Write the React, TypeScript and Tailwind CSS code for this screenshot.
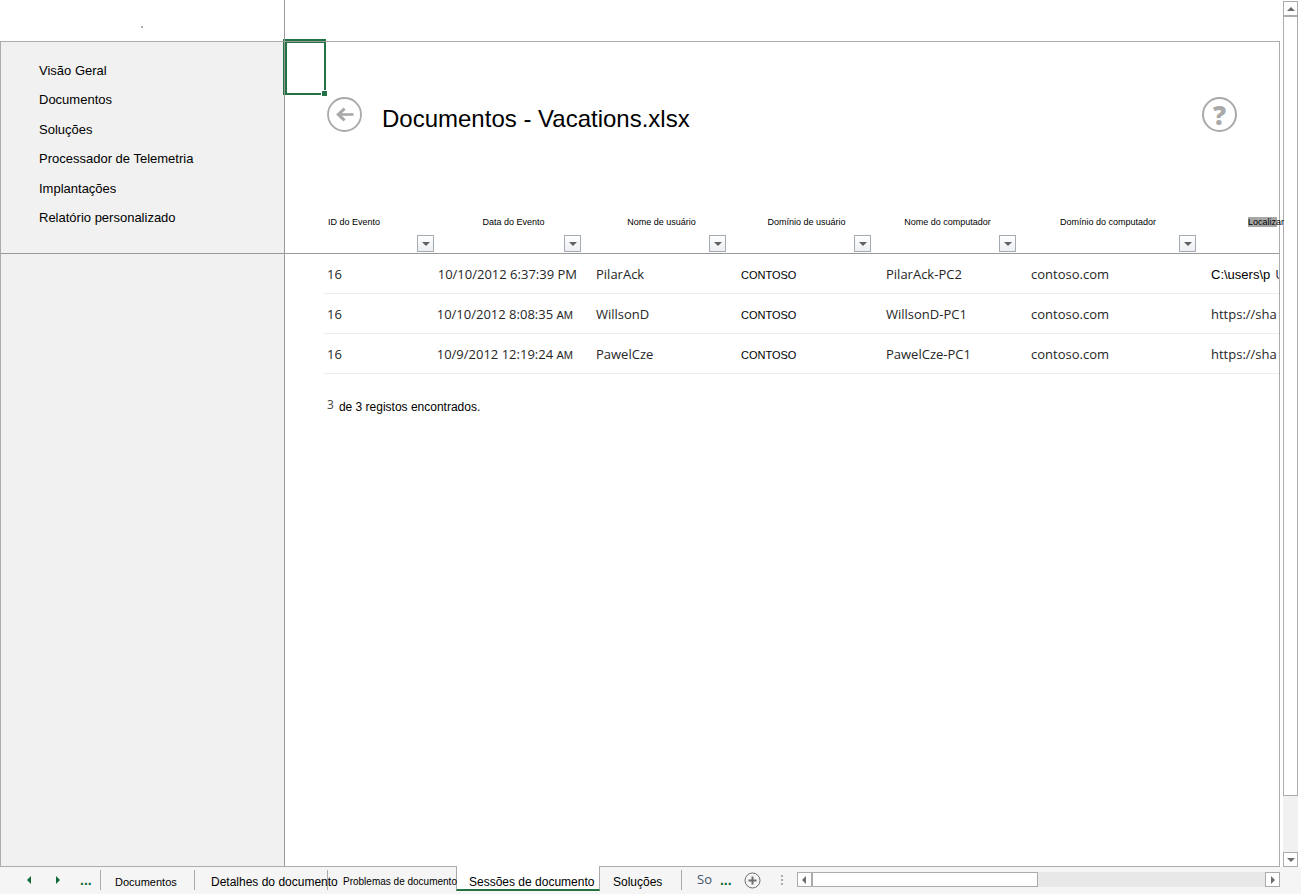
import { useState } from "react";
import clsx from "clsx";

const NAV_ITEMS = [
    "Visão Geral",
    "Documentos",
    "Soluções",
    "Processador de Telemetria",
    "Implantações",
    "Relatório personalizado",
];

const COLUMNS = [
    { label: "ID do Evento", width: "w-[112px]", head: "text-left pl-1" },
    { label: "Data do Evento", width: "w-[147px]", head: "text-center pl-2" },
    { label: "Nome de usuário", width: "w-[145px]", head: "text-center pl-3" },
    { label: "Domínio de usuário", width: "w-[145px]", head: "text-center pl-3" },
    { label: "Nome do computador", width: "w-[145px]", head: "text-center pl-1" },
    { label: "Domínio do computador", width: "w-[180px]", head: "text-center" },
];

const SESSIONS = [
    { id: "16", date: "10/10/2012 6:37:39", period: "PM", user: "PilarAck", domain: "CONTOSO", pc: "PilarAck-PC2", pcDomain: "contoso.com", path: "C:\\users\\p", local: true },
    { id: "16", date: "10/10/2012 8:08:35", period: "AM", user: "WillsonD", domain: "CONTOSO", pc: "WillsonD-PC1", pcDomain: "contoso.com", path: "https://sha", local: false },
    { id: "16", date: "10/9/2012 12:19:24", period: "AM", user: "PawelCze", domain: "CONTOSO", pc: "PawelCze-PC1", pcDomain: "contoso.com", path: "https://sha", local: false },
];

const TABS = [
    { label: "Documentos", box: "w-[94px] pl-[14px]", text: "text-[11px]" },
    { label: "Detalhes do documento", box: "w-[133px] pl-4", text: "text-xs" },
    { label: "Problemas de documento", box: "w-[128px] pl-[15px]", text: "text-[10px]" },
    { label: "Sessões de documento", box: "w-[144px] pl-3", text: "text-xs" },
    { label: "Soluções", box: "w-[82px] pl-[13px]", text: "text-xs" },
];

const ARROWS = {
    up: "M0 6 L4 2 L8 6 Z",
    down: "M0 2 L8 2 L4 6 Z",
    left: "M6 0 L2 4 L6 8 Z",
    right: "M2 0 L6 4 L2 8 Z",
};

function Arrow({ dir }: { dir: keyof typeof ARROWS }) {
    return (
        <svg viewBox="0 0 8 8" className="size-2" fill="currentColor" aria-hidden="true">
            <path d={ARROWS[dir]} />
        </svg>
    );
}

function ScrollButton({ dir, label }: { dir: keyof typeof ARROWS; label: string }) {
    return (
        <button
            aria-label={label}
            className="flex size-[15px] shrink-0 items-center justify-center border border-[#ababab] bg-white text-[#6d6d6d]"
        >
            <Arrow dir={dir} />
        </button>
    );
}

function FilterButton({ label }: { label: string }) {
    return (
        <button
            aria-label={`Filtrar ${label}`}
            className="flex size-[17px] items-center justify-center border border-[#a5abb3] bg-linear-to-b from-white to-[#eceef2] text-[#5f6166]"
        >
            <Arrow dir="down" />
        </button>
    );
}

function Sidebar() {
    return (
        <aside className="w-[284px] shrink-0 border-r border-[#999] bg-[#f1f1f1]">
            <nav className="flex h-[212px] flex-col justify-between border-b border-[#999] pt-[19px] pb-[25px] pl-[38px]">
                {NAV_ITEMS.map((item) => (
                    <a key={item} href="#" className="text-[13px] leading-5 text-black">
                        {item}
                    </a>
                ))}
            </nav>
        </aside>
    );
}

// Active cell outline, with the frozen pane lines running through it
function CellCursor() {
    return (
        <div className="absolute -top-[3px] -left-[2px] h-[56px] w-[43px] border-t-4 border-r-2 border-b-2 border-l-4 border-[#217346]">
            <div className="absolute -top-[2px] -left-1 h-px w-[43px] bg-[#999]" />
            <div className="absolute -top-1 -left-[3px] h-[56px] w-px bg-[#999]" />
            <div className="absolute -right-[3px] -bottom-[3px] size-[6px] border-t border-l border-white bg-[#217346]" />
        </div>
    );
}

function SessionTable() {
    return (
        <table className="w-full table-fixed border-collapse text-left">
            <thead>
                <tr className="h-[41px] border-b border-[#999]">
                    <td className="w-[39px]" />
                    {COLUMNS.map((col) => (
                        <th key={col.label} className={clsx("p-0 align-top font-normal", col.width)}>
                            <div className={clsx("h-[23px] text-[9px] leading-[21px] whitespace-nowrap", col.head)}>
                                {col.label}
                            </div>
                            <div className="flex justify-end pr-[2px]">
                                <FilterButton label={col.label} />
                            </div>
                        </th>
                    ))}
                    <th className="p-0 pl-[50px] align-top text-[9px] leading-[21px] font-normal">
                        <span className="relative z-10 inline-block h-[10px] w-[29px] bg-[#a6a6a6] leading-[10px] whitespace-nowrap">
                            Localizar
                        </span>
                    </th>
                </tr>
            </thead>
            <tbody className="font-['Open_Sans','Noto_Sans',sans-serif] text-[13px] leading-5 whitespace-nowrap text-[#262626]">
                {SESSIONS.map((row) => (
                    <tr key={row.pc} className="h-10 *:border-b *:border-[#ededed] *:p-0 *:pt-[2px]">
                        <td className="border-none!" />
                        <td className="pl-[3px]!">{row.id}</td>
                        <td className="pr-[6px]! text-right">
                            {row.date}{" "}
                            {row.period === "AM" ? (
                                <span className="pr-1 font-['Liberation_Sans',sans-serif] text-[11px]">AM</span>
                            ) : (
                                row.period
                            )}
                        </td>
                        <td className="pl-[13px]!">{row.user}</td>
                        <td className="pt-1! pl-[13px]! font-['Liberation_Sans',sans-serif] text-[11px] text-black">{row.domain}</td>
                        <td className="pl-[13px]!">{row.pc}</td>
                        <td className="pl-[13px]!">{row.pcDomain}</td>
                        <td className="overflow-hidden pl-[13px]!">
                            {row.local ? (
                                <>
                                    <span className="font-['Liberation_Sans',sans-serif] text-black">{row.path}</span>
                                    <span className="pl-[5px]">U</span>
                                </>
                            ) : (
                                row.path
                            )}
                        </td>
                    </tr>
                ))}
            </tbody>
        </table>
    );
}

function SheetBar() {
    const [active, setActive] = useState("Sessões de documento");

    return (
        <footer className="flex h-[27px] items-start bg-[#f5f5f5]">
            <div className="flex h-[26px] w-[101px] shrink-0 items-center pl-[25px] text-[#0e6b38]">
                <button aria-label="Planilha anterior">
                    <Arrow dir="left" />
                </button>
                <button aria-label="Próxima planilha" className="ml-[21px]">
                    <Arrow dir="right" />
                </button>
                <button aria-label="Mais planilhas" className="ml-[18px] text-sm leading-5 font-bold">...</button>
            </div>
            <div className="flex shrink-0">
                {TABS.map((tab, i) => {
                    const isActive = tab.label === active;
                    const nextActive = TABS[i + 1]?.label === active;
                    return (
                        <button
                            key={tab.label}
                            onClick={() => setActive(tab.label)}
                            className={clsx(
                                "relative text-left leading-6 whitespace-nowrap",
                                tab.box,
                                tab.text,
                                isActive
                                    ? "-mt-px h-[25px] border-x border-b-2 border-x-[#ababab] border-b-[#217346] bg-white pt-1"
                                    : "h-6 pt-[3px]"
                            )}
                        >
                            {!isActive && i === 0 && <span className="absolute top-[3px] -left-px h-5 w-px bg-[#ababab]" />}
                            {!isActive && !nextActive && <span className="absolute top-[3px] right-0 h-5 w-px bg-[#ababab]" />}
                            <span className="relative z-10">{tab.label}</span>
                        </button>
                    );
                })}
            </div>
            <div className="flex h-[26px] shrink-0 items-center">
                <button className="ml-[15px] font-['Open_Sans','Noto_Sans',sans-serif] text-[13px] text-[#44546a]">So</button>
                <button aria-label="Mais planilhas" className="ml-2 text-sm leading-5 font-bold text-[#0e6b38]">...</button>
                <button aria-label="Nova planilha" className="ml-3">
                    <svg viewBox="0 0 17 17" className="size-[17px]" fill="none" stroke="#6d6d6d" aria-hidden="true">
                        <circle cx="8.5" cy="8.5" r="7.5" />
                        <path d="M8.5 4.5V12.5M4.5 8.5H12.5" strokeWidth="2" />
                    </svg>
                </button>
                <svg viewBox="0 0 2 10" className="mr-[14px] ml-5 h-[10px] w-[2px]" fill="#ababab" aria-hidden="true">
                    <path d="M0 0H2V2H0ZM0 4H2V6H0ZM0 8H2V10H0Z" />
                </svg>
            </div>
            <div className="mt-[5px] mr-[21px] flex flex-1 bg-[#e8e8e8]">
                <ScrollButton dir="left" label="Rolar para a esquerda" />
                <div className="flex-1">
                    <div className="h-[15px] w-1/2 border border-[#ababab] bg-white" />
                </div>
                <ScrollButton dir="right" label="Rolar para a direita" />
            </div>
        </footer>
    );
}

export default function App() {
    return (
        <div className="flex min-h-screen flex-col bg-white font-['Liberation_Sans',Arial,sans-serif] text-black">
            <div className="flex flex-1">
                <div className="flex min-w-0 flex-1 flex-col border-b border-[#ababab]">
                    {/* Frozen top row */}
                    <div className="h-[41px] w-[285px] border-r border-[#999] pt-[26px] pl-[141px]">
                        <div className="size-[2px] bg-[#ababab]" />
                    </div>
                    <div className="flex flex-1 border-x border-t border-[#ababab]">
                        <Sidebar />
                        <main className="relative min-w-0 flex-1">
                            <CellCursor />
                            <div className="flex h-[170px] items-start pt-[55px] pr-[42px] pl-[42px]">
                                <button aria-label="Voltar">
                                    <svg viewBox="0 0 35 35" className="size-[35px]" fill="none" stroke="#a9a9a9" aria-hidden="true">
                                        <circle cx="17.5" cy="17.5" r="16.5" strokeWidth="1.8" />
                                        <path d="M26.5 17.5H11.5" strokeWidth="2.6" />
                                        <path d="M17.6 11.6L11.3 17.5L17.6 23.4" strokeWidth="3" />
                                    </svg>
                                </button>
                                <h1 className="ml-5 flex-1 pt-[7px] text-2xl leading-[30px]">Documentos - Vacations.xlsx</h1>
                                <button
                                    aria-label="Ajuda"
                                    className="flex size-[35px] items-center justify-center rounded-full border-2 border-[#a9a9a9] font-['Open_Sans','Noto_Sans',sans-serif] text-[26px] leading-none font-extrabold text-[#a9a9a9]"
                                >
                                    ?
                                </button>
                            </div>
                            <SessionTable />
                            <p className="flex gap-[5px] pt-[23px] pl-[42px] text-xs leading-5">
                                <span className="font-['Open_Sans','Noto_Sans',sans-serif] leading-4 text-[#444]">3</span>
                                <span>de 3 registos encontrados.</span>
                            </p>
                        </main>
                    </div>
                </div>
                {/* Vertical scroll bar */}
                <div className="mx-[3px] mt-px flex flex-col bg-[#f1f1f1]">
                    <ScrollButton dir="up" label="Rolar para cima" />
                    <div className="flex-1">
                        <div className="h-[93.3%] w-[15px] border border-[#ababab] bg-white" />
                    </div>
                    <ScrollButton dir="down" label="Rolar para baixo" />
                </div>
            </div>
            <SheetBar />
        </div>
    );
}
